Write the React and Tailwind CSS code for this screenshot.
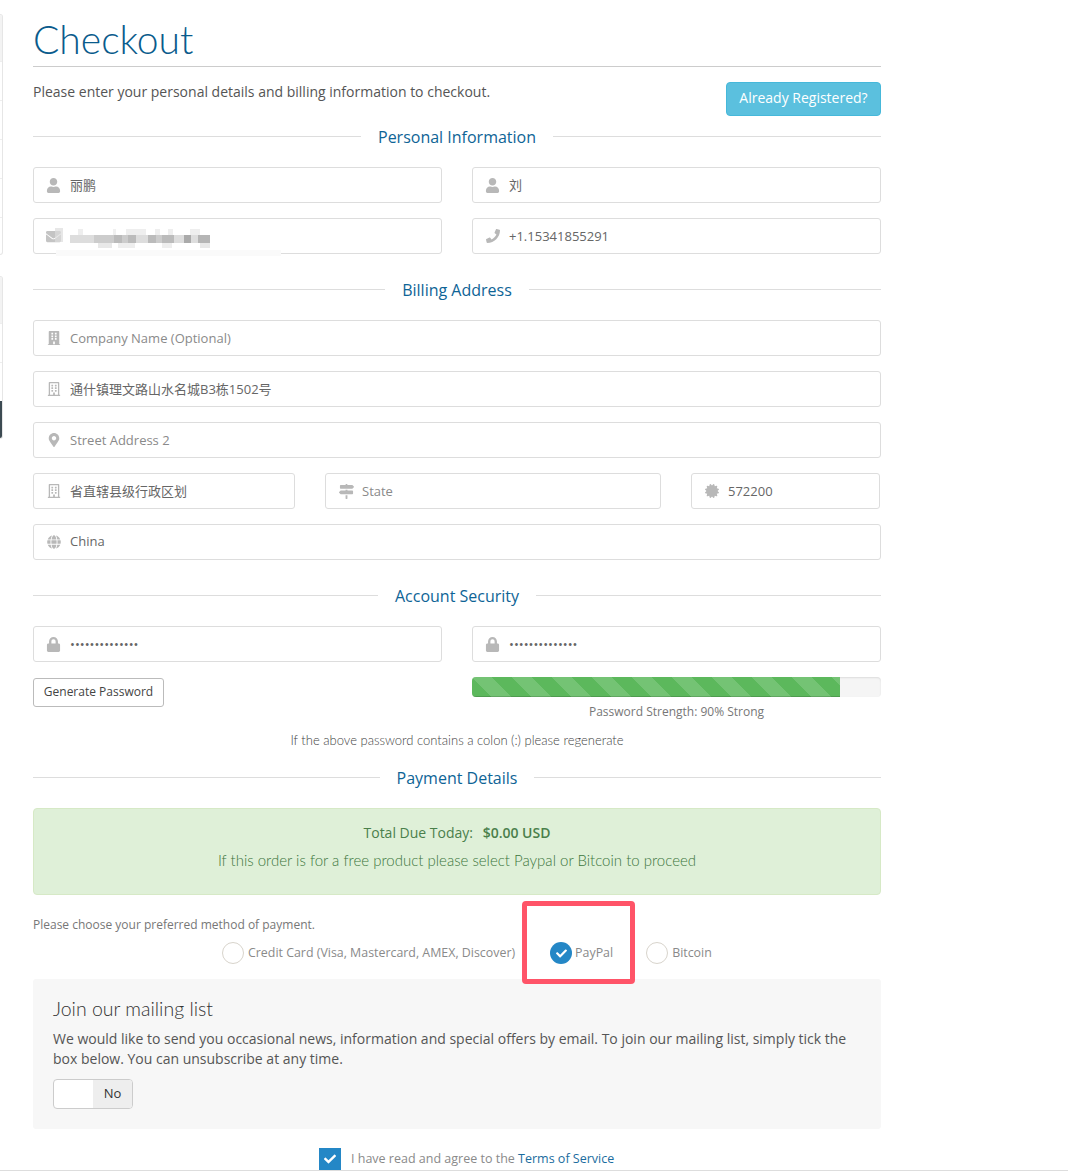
import { FaUser, FaEnvelope, FaPhone, FaBuilding, FaRegBuilding, FaMapMarkerAlt, FaMapSigns, FaCertificate, FaGlobe, FaLock, FaCheck } from "react-icons/fa";

const SANS = "font-['Open_Sans','Noto_Sans_CJK_SC',sans-serif]";
const HEAD = "font-['Lato','Open_Sans',sans-serif]";

// The blurred email address, as rows of [width, colour]
const BLUR_ROWS = [
  { h: "h-[6px]", cells: [[8, "#fff"], [5, "#eee"], [30, "#fff"], [3, "#f0f0f0"], [10, "#fff"], [20, "#eee"], [9, "#fff"], [5, "#eee"], [8, "#fff"], [5, "#eee"], [17, "#fff"], [10, "#eee"]] },
  { h: "h-[8px]", cells: [[24, "#ddd"], [20, "#ccc"], [8, "#bbb"], [6, "#ccc"], [8, "#bbb"], [12, "#ddd"], [8, "#bbb"], [6, "#ccc"], [12, "#bbb"], [10, "#ddd"], [7, "#aaa"], [7, "#ddd"], [12, "#b5b5b5"]] },
  { h: "h-[5px]", cells: [[28, "#fff"], [14, "#e8e8e8"], [6, "#fff"], [17, "#eee"], [27, "#fff"], [10, "#eee"], [28, "#fff"], [10, "#e8e8e8"]] },
];

// Section heading with a rule on both sides
function SectionTitle({ children, className }) {
  return (
    <div className={`flex items-center gap-[17px] ${className}`}>
      <div className="h-px flex-1 bg-[#ddd]" />
      <h2 className="pt-[2px] text-[16px] leading-[22px] text-[#0e6496]">{children}</h2>
      <div className="h-px flex-1 bg-[#ddd]" />
    </div>
  );
}

function Field({ icon: Icon, size = 14, muted, tight, flush, className = "", children }) {
  return (
    <div className={`flex h-9 items-center rounded-[3px] border border-[#ddd] bg-white ${className}`}>
      <span className={`flex w-9 shrink-0 justify-center text-[#b8b8b8] ${tight ? "pl-[2px]" : "pl-[4px]"}`}>
        <Icon size={size} />
      </span>
      <span className={`text-[13px] ${flush ? "" : "mt-px"} ${muted ? "text-[#8a8a8a]" : "text-[#666]"}`}>{children}</span>
    </div>
  );
}

function Radio({ checked, label, className = "" }) {
  return (
    <div className={`flex items-center ${checked ? "gap-[3px]" : "gap-[4px]"} ${className}`}>
      {checked ? (
        <span className="flex h-[22px] w-[22px] items-center justify-center rounded-full bg-[#2487c6] text-white">
          <FaCheck size={11} />
        </span>
      ) : (
        <span className="h-[22px] w-[22px] rounded-full border border-[#d8d4cc] bg-white" />
      )}
      <span className="text-[12.4px] text-[#8a8a8a]">{label}</span>
    </div>
  );
}

function SidePanel({ className, rows, children }) {
  return (
    <div className={`absolute left-0 w-[3px] overflow-hidden rounded-r border-y border-r border-[#e6e6e6] ${className}`}>
      <div className="h-[46px] bg-[#f3f3f3]" />
      {rows.map((r) => (
        <div key={r} className="h-[39px] border-t border-[#eee]" />
      ))}
      {children}
    </div>
  );
}

export default function App() {
  return (
    <div className={`relative h-[1171px] w-[1068px] overflow-hidden bg-white ${SANS}`}>
      {/* Slivers of the sidebar at the left edge */}
      <SidePanel className="top-[14px] h-[241px]" rows={[1, 2, 3, 4, 5]} />
      <SidePanel className="top-[276px] h-[163px]" rows={[1, 2]}>
        <div className="h-[39px] bg-[#3c4a52]" />
      </SidePanel>

      <main className="ml-[33px] w-[848px]">
        <h1 className={`h-[67px] border-b border-[#ccc] pt-[14px] text-[39px] font-light leading-[50px] text-[#0a5b8c] ${HEAD}`}>Checkout</h1>

        <div className="mt-[15px] flex items-start justify-between">
          <p className="text-[14px] leading-[20px] text-[#555]">Please enter your personal details and billing information to checkout.</p>
          <button className="h-[34px] w-[155px] rounded-[4px] border border-[#46b8da] bg-[#5bc0de] pb-[3px] text-[14px] text-white">Already Registered?</button>
        </div>

        <SectionTitle className="mt-[8px]">Personal Information</SectionTitle>

        <div className="mt-[19px] grid grid-cols-2 gap-x-[30px] gap-y-[15px]">
          <Field icon={FaUser} size={15} tight>丽鹏</Field>
          <Field icon={FaUser} size={15} tight>刘</Field>
          <div className="relative flex h-9 items-center rounded-[3px] border border-[#ddd] bg-white">
            <span className="flex w-9 shrink-0 justify-center pl-[2px] text-[#c4c4c4]"><FaEnvelope size={15} /></span>
            <div className="absolute left-[21px] top-[9px] h-[14px] w-[8px] bg-[#ddd]/70 blur-[0.6px]" />
            <div className="mt-[5px] w-[140px] blur-[0.6px]">
              {BLUR_ROWS.map((row) => (
                <div key={row.h} className={`flex ${row.h}`}>
                  {row.cells.map(([w, c], i) => (
                    <div key={i} style={{ width: w, background: c }} />
                  ))}
                </div>
              ))}
            </div>
            <div className="absolute left-[22px] top-[31px] h-[6px] w-[225px] bg-[#fafafa]" />
          </div>
          <Field icon={FaPhone}>+1.15341855291</Field>
        </div>

        <SectionTitle className="mt-[23px]">Billing Address</SectionTitle>

        <div className="mt-[19px] flex flex-col gap-[15px]">
          <Field icon={FaBuilding} muted>Company Name (Optional)</Field>
          <Field icon={FaRegBuilding}>通什镇理文路山水名城B3栋1502号</Field>
          <Field icon={FaMapMarkerAlt} muted>Street Address 2</Field>
          <div className="flex">
            <Field icon={FaRegBuilding} className="w-[262px]">省直辖县级行政区划</Field>
            <Field icon={FaMapSigns} size={15} muted className="ml-[30px] w-[336px]">State</Field>
            <Field icon={FaCertificate} className="ml-[30px] w-[189px]">572200</Field>
          </div>
          <Field icon={FaGlobe} flush>China</Field>
        </div>

        <SectionTitle className="mt-[23px]">Account Security</SectionTitle>

        <div className="mt-[19px] grid grid-cols-2 gap-x-[30px] gap-y-[15px]">
          <Field icon={FaLock} size={15} tight>••••••••••••••</Field>
          <Field icon={FaLock} size={15} tight>••••••••••••••</Field>
          <div className="mt-px">
            <button className="h-[29px] w-[131px] rounded-[3px] border border-[#bbb] bg-white pb-px text-[12px] text-[#444]">Generate Password</button>
          </div>
          <div>
            <div className="h-5 overflow-hidden rounded-[4px] bg-[#f5f5f5] shadow-[inset_0_1px_2px_rgba(0,0,0,0.1)]">
              <div className="h-full w-[90%] bg-[#5cb85c] bg-[linear-gradient(45deg,rgba(255,255,255,.15)_25%,transparent_25%,transparent_50%,rgba(255,255,255,.15)_50%,rgba(255,255,255,.15)_75%,transparent_75%,transparent)] bg-[length:40px_40px] shadow-[inset_0_-1px_0_rgba(0,0,0,0.15)]" />
            </div>
            <p className="mt-[6px] text-center text-[12px] leading-[17px] text-[#777]">Password Strength: 90% Strong</p>
          </div>
        </div>

        <p className={`mt-[10px] text-center text-[13px] font-light leading-[20px] text-[#444] ${HEAD}`}>If the above password contains a colon (:) please regenerate</p>

        <SectionTitle className="mt-[15px]">Payment Details</SectionTitle>

        <div className="mt-[19px] h-[87px] rounded-[4px] border border-[#d6e9c6] bg-[#dff0d8] pt-[14px] text-center text-[#4a7f4b]">
          <p className="text-[14px] leading-[20px]">Total Due Today: <strong className="ml-[6px] font-semibold">$0.00 USD</strong></p>
          <p className={`mt-[7px] text-[15px] font-light leading-[21px] text-[#3c763d] ${HEAD}`}>If this order is for a free product please select Paypal or Bitcoin to proceed</p>
        </div>

        <p className="mt-[21px] text-[12px] leading-[17px] text-[#777]">Please choose your preferred method of payment.</p>

        <div className="ml-[189px] mt-[9px] flex h-[22px]">
          <Radio label="Credit Card (Visa, Mastercard, AMEX, Discover)" />
          <Radio checked label="PayPal" className="ml-[35px]" />
          <Radio label="Bitcoin" className="ml-[33px]" />
        </div>

        <section className="mt-[15px] h-[150px] rounded-[3px] bg-[#f7f7f7] px-5 pt-[17px]">
          <h3 className={`text-[19.5px] font-light leading-[25px] text-[#333] ${HEAD}`}>Join our mailing list</h3>
          <p className="mt-[8px] text-[14px] leading-[20px] text-[#555]">We would like to send you occasional news, information and special offers by email. To join our mailing list, simply tick the box below. You can unsubscribe at any time.</p>
          <div className="mt-[10px] flex h-[30px] w-20 overflow-hidden rounded-[4px] border border-[#ccc] bg-white">
            <div className="w-[39px]" />
            <div className="flex flex-1 items-center justify-center bg-[#eee] text-[13px] text-[#333]">No</div>
          </div>
        </section>

        <div className="ml-[286px] mt-[19px] flex items-center gap-[10px]">
          <span className="flex h-[22px] w-[22px] items-center justify-center bg-[#2487c6] text-white"><FaCheck size={12} /></span>
          <span className="text-[12.5px] text-[#8a8a8a]">I have read and agree to the <span className="text-[#1a6c9e]">Terms of Service</span></span>
        </div>
      </main>

      {/* Annotation box over the PayPal option */}
      <div className="absolute left-[522px] top-[901px] h-[83px] w-[113px] rounded-[4px] border-[5px] border-[#ff5468]" />
      <div className="absolute bottom-0 left-0 h-px w-full bg-[#ddd]" />
    </div>
  );
}
